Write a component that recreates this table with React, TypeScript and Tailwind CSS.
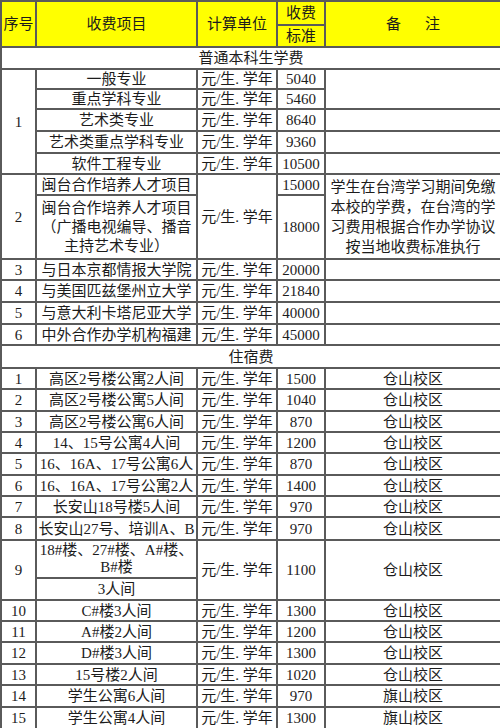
import React from 'react';

const UNIT = '元/生. 学年';

const td = 'border-2 border-[#5a5a5a] p-0 text-center align-middle';

type Row = { h: number; no: string; item: string; fee: string; note: string };

const tuitionTail: Row[] = [
  { h: 21, no: '3', item: '与日本京都情报大学院', fee: '20000', note: '' },
  { h: 22, no: '4', item: '与美国匹兹堡州立大学', fee: '21840', note: '' },
  { h: 22, no: '5', item: '与意大利卡塔尼亚大学', fee: '40000', note: '' },
  { h: 21, no: '6', item: '中外合作办学机构福建', fee: '45000', note: '' },
];

const dormA: Row[] = [
  { h: 21, no: '1', item: '高区2号楼公寓2人间', fee: '1500', note: '仓山校区' },
  { h: 22, no: '2', item: '高区2号楼公寓5人间', fee: '1040', note: '仓山校区' },
  { h: 21, no: '3', item: '高区2号楼公寓6人间', fee: '870', note: '仓山校区' },
  { h: 21, no: '4', item: '14、15号公寓4人间', fee: '1200', note: '仓山校区' },
  { h: 22, no: '5', item: '16、16A、17号公寓6人', fee: '870', note: '仓山校区' },
  { h: 21, no: '6', item: '16、16A、17号公寓2人', fee: '1400', note: '仓山校区' },
  { h: 21, no: '7', item: '长安山18号楼5人间', fee: '970', note: '仓山校区' },
  { h: 23, no: '8', item: '长安山27号、培训A、B', fee: '970', note: '仓山校区' },
];

const dormB: Row[] = [
  { h: 21, no: '10', item: 'C#楼3人间', fee: '1300', note: '仓山校区' },
  { h: 21, no: '11', item: 'A#楼2人间', fee: '1200', note: '仓山校区' },
  { h: 22, no: '12', item: 'D#楼3人间', fee: '1300', note: '仓山校区' },
  { h: 21, no: '13', item: '15号楼2人间', fee: '1020', note: '仓山校区' },
  { h: 22, no: '14', item: '学生公寓6人间', fee: '970', note: '旗山校区' },
  { h: 22, no: '15', item: '学生公寓4人间', fee: '1300', note: '旗山校区' },
];

const PlainRow = ({ r }: { r: Row }) => (
  <tr style={{ height: r.h }}>
    <td className={td}>{r.no}</td>
    <td className={`${td} whitespace-nowrap`}>{r.item}</td>
    <td className={`${td} whitespace-nowrap`}>{UNIT}</td>
    <td className={td}>{r.fee}</td>
    <td className={td}>{r.note}</td>
  </tr>
);

const Section = ({ title, h }: { title: string; h: number }) => (
  <tr style={{ height: h }}>
    <td colSpan={5} className={td}>
      {title}
    </td>
  </tr>
);

export default function App() {
  return (
    <div className="w-[500px] h-[728px] overflow-hidden bg-white text-[#1c1c1c] text-[15px] leading-[16px] font-['Liberation_Serif','Noto_Sans_CJK_SC',serif]">
      <table className="table-fixed border-collapse w-[500px]">
        <colgroup>
          <col className="w-[35px]" />
          <col className="w-[161px]" />
          <col className="w-[80px]" />
          <col className="w-[48px]" />
          <col className="w-[176px]" />
        </colgroup>
        <tbody>
          <tr className="h-[24px] bg-[#ffff00]">
            <td rowSpan={2} className={td}>序号</td>
            <td rowSpan={2} className={td}>收费项目</td>
            <td rowSpan={2} className={td}>计算单位</td>
            <td className={td}>收费</td>
            <td rowSpan={2} className={td}>
              <span className="inline-flex gap-[24px]">
                <span>备</span>
                <span>注</span>
              </span>
            </td>
          </tr>
          <tr className="h-[22px] bg-[#ffff00]">
            <td className={td}>标准</td>
          </tr>

          <Section title="普通本科生学费" h={22} />
          <tr className="h-[20px]">
            <td rowSpan={5} className={td}>1</td>
            <td className={td}>一般专业</td>
            <td className={td}>{UNIT}</td>
            <td className={td}>5040</td>
            <td rowSpan={2} className={td}></td>
          </tr>
          <tr className="h-[20px]">
            <td className={td}>重点学科专业</td>
            <td className={td}>{UNIT}</td>
            <td className={td}>5460</td>
          </tr>
          <tr className="h-[22px]">
            <td className={td}>艺术类专业</td>
            <td className={td}>{UNIT}</td>
            <td className={td}>8640</td>
            <td className={td}></td>
          </tr>
          <tr className="h-[22px]">
            <td className={td}>艺术类重点学科专业</td>
            <td className={td}>{UNIT}</td>
            <td className={td}>9360</td>
            <td className={td}></td>
          </tr>
          <tr className="h-[21px]">
            <td className={td}>软件工程专业</td>
            <td className={td}>{UNIT}</td>
            <td className={td}>10500</td>
            <td className={td}></td>
          </tr>

          <tr className="h-[21px]">
            <td rowSpan={2} className={td}>2</td>
            <td className={td}>闽台合作培养人才项目</td>
            <td rowSpan={2} className={td}>{UNIT}</td>
            <td className={td}>15000</td>
            <td rowSpan={2} className={`${td} px-1 leading-[20px]`}>
              学生在台湾学习期间免缴
              <br />
              本校的学费，在台湾的学
              <br />
              习费用根据合作办学协议
              <br />
              按当地收费标准执行
            </td>
          </tr>
          <tr className="h-[64px]">
            <td className={`${td} leading-[19px]`}>
              闽台合作培养人才项目
              <br />
              （广播电视编导、播音
              <br />
              主持艺术专业）
            </td>
            <td className={td}>18000</td>
          </tr>
          {tuitionTail.map((r) => (
            <PlainRow key={r.no} r={r} />
          ))}

          <Section title="住宿费" h={23} />
          {dormA.map((r) => (
            <PlainRow key={r.no} r={r} />
          ))}
          <tr className="h-[38px]">
            <td rowSpan={2} className={td}>9</td>
            <td className={`${td} leading-[17px]`}>
              18#楼、27#楼、A#楼、
              <br />
              B#楼
            </td>
            <td rowSpan={2} className={td}>{UNIT}</td>
            <td rowSpan={2} className={td}>1100</td>
            <td rowSpan={2} className={td}>仓山校区</td>
          </tr>
          <tr className="h-[22px]">
            <td className={td}>3人间</td>
          </tr>
          {dormB.map((r) => (
            <PlainRow key={r.no} r={r} />
          ))}
        </tbody>
      </table>
    </div>
  );
}
